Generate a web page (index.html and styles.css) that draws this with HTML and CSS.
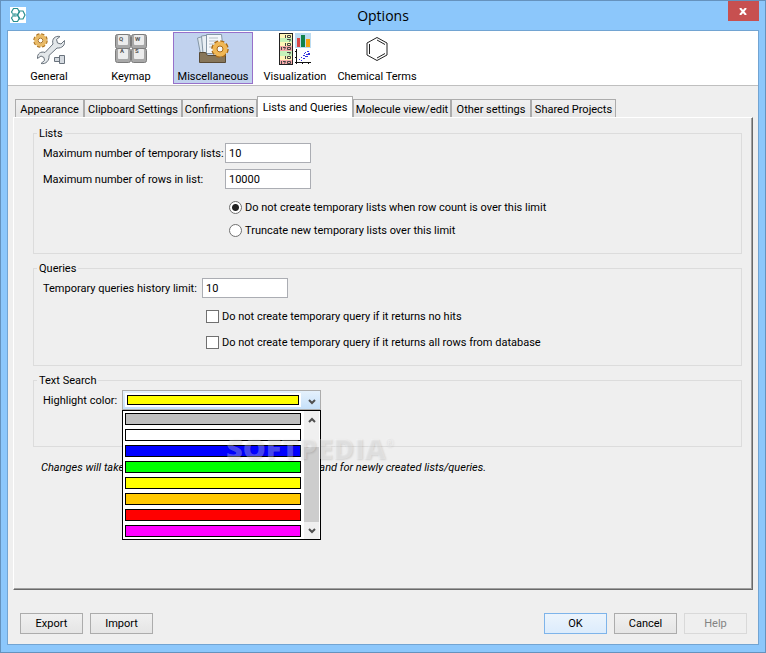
FILE: index.html
```html
<!DOCTYPE html>
<html lang="en">
<head>
    <meta charset="UTF-8">
    <meta name="viewport" content="width=device-width, initial-scale=1.0">
    <title>Options</title>
    <link rel="stylesheet" href="styles.css">
</head>
<body>
    <div class="window">
        <header class="title-bar">
            <svg class="app-icon" width="16" height="16" viewBox="0 0 16 16">
                <rect width="16" height="16" fill="#fff"/>
                <g fill="none" stroke="#2a8f8f" stroke-width="1.2">
                    <path d="M3.500 1.500h4L9.500 5l-2 3h-4l-2-3z"/>
                    <path d="M3.500 8h4l2 3-2 3.500h-4l-2-3.500z"/>
                    <path d="M9.500 4h3.500l2 4-2 4H9.500L7.500 8z"/>
                    <path d="M3 6.500h3v3H3z" stroke="#8cc4c4"/>
                </g>
            </svg>
            <h1>Options</h1>
            <button class="close" aria-label="Close">
                <svg width="8" height="7" viewBox="0 0 8 7"><path d="M1 0l6 7M7 0L1 7" stroke="#fff" stroke-width="2"/></svg>
            </button>
        </header>

        <main class="content">
            <nav class="toolbar">
                <button class="tool">
                    <svg width="32" height="32" viewBox="0 0 32 32">
                        <circle cx="7.500" cy="7.500" r="6" fill="none" stroke="#a87020" stroke-width="2.500" stroke-dasharray="3 1.700"/>
                        <circle cx="7.500" cy="7.500" r="4.500" fill="#fff" stroke="#e9ba66" stroke-width="3.500"/>
                        <circle cx="7.500" cy="7.500" r="2.400" fill="#fff" stroke="#a87020"/>
                        <path d="M31.500 7.500l-3.500 3.500-3.500-1-1-3.500L27 3.500c-5-1-8.500 2.500-7 7.500l-8 8.500c-4-1.500-8 1-7.500 6l3.500-2.500 3 1.500.5 3-3.500 3c5 1 8.500-3 8-8l8-7.500c5 .5 8.500-3 7.500-7.500z" fill="#e3e7ea" stroke="#69727c"/>
                        <path d="M21.500 24.500h5v4h-5zM26.500 22.500h5v8h-5z" fill="#d5dae0" stroke="#69727c"/>
                    </svg>
                    General
                </button>
                <button class="tool">
                    <svg width="32" height="32" viewBox="0 0 32 32">
                        <g fill="#a8a8a8" stroke="#7c7c7c">
                            <rect x="0.500" y="1.500" width="15" height="14" rx="2"/>
                            <rect x="16.500" y="1.500" width="15" height="14" rx="2"/>
                            <rect x="0.500" y="15.500" width="15" height="14" rx="2"/>
                            <rect x="16.500" y="15.500" width="15" height="14" rx="2"/>
                        </g>
                        <g fill="#ececec">
                            <rect x="3" y="2" width="10" height="10" rx="1"/>
                            <rect x="19" y="2" width="10" height="10" rx="1"/>
                            <rect x="3" y="16" width="10" height="10" rx="1"/>
                            <rect x="19" y="16" width="10" height="10" rx="1"/>
                        </g>
                        <g class="key-letters">
                            <text x="4" y="8">Q</text>
                            <text x="20" y="8">W</text>
                            <text x="5" y="20">A</text>
                            <text x="20" y="20">S</text>
                        </g>
                    </svg>
                    Keymap
                </button>
                <button class="tool active">
                    <svg width="32" height="32" viewBox="0 0 32 32">
                        <path d="M0.500 5l7-2 2 17-6 1z" fill="#dde6ed" stroke="#8496a5"/>
                        <path d="M4.500 3l8-1 1 18H6z" fill="#e9eff4" stroke="#8496a5"/>
                        <path d="M9.500 1.500h15l2 19h-17z" fill="#f4f7fa" stroke="#8496a5"/>
                        <path d="M12 5h9M12 8h9M12 11h6M12 14h4" stroke="#b4bec6"/>
                        <path d="M2.500 19.500h6l2 3h10l2-3h6v10h-26z" fill="#87765a" stroke="#594a34"/>
                        <circle cx="23" cy="16" r="7.500" fill="none" stroke="#a86a18" stroke-width="2.500" stroke-dasharray="3.900 2"/>
                        <circle cx="23" cy="16" r="5" fill="none" stroke="#f0b755" stroke-width="5"/>
                        <circle cx="23" cy="16" r="3" fill="#f4f7fa" stroke="#a86a18"/>
                    </svg>
                    Miscellaneous
                </button>
                <button class="tool">
                    <svg width="32" height="32" viewBox="0 0 32 32">
                        <rect x="0.500" y="0.500" width="13" height="31" fill="#fff6b8"/>
                        <path d="M1 5h12v4H1zM1 18h12v5H1z" fill="#c5f2ba"/>
                        <path d="M1 13h12v5H1zM1 27h12v4H1z" fill="#f5a9a9"/>
                        <rect x="0.500" y="0.500" width="13" height="31" fill="none" stroke="#222"/>
                        <path d="M6.500 2v3M8.500 2.500h3v2h-3zM8 6.500h3.500l-1 2M6.500 10v3M8.500 10.500h3v2h-3zM2.500 14v3M4 14.500h2.500l-1 2M8.500 14.500h3v2h-3zM8 19.500h3.500l-1 2M6.500 23v3M8.500 23.500h3v2h-3zM2.500 28v3M4 28.500h2.500l-1 2M8.500 28.500h3v2h-3z" fill="none" stroke="#444"/>
                        <rect x="16" y="0" width="16" height="15" fill="#bcdcf2"/>
                        <path d="M18 5h3v9h-3z" fill="#d84545"/>
                        <path d="M22 2h4v12h-4z" fill="#11824b"/>
                        <path d="M27 6h4v8h-4z" fill="#f4a30f"/>
                        <path d="M17.500 16v15M16 29.500h16M16 18.500h2M16 24.500h2M23.500 29v2M29.500 29v2" stroke="#111" fill="none"/>
                        <path d="M20 26.500h1M22 24.500h1M22 27.500h1M24 22.500h2M24 25.500h2M26 19.500h1M26 23.500h3M28 18.500h2M27 21.500h4M29 20.500h2M25 20.500h1" stroke="#3434dd"/>
                    </svg>
                    Visualization
                </button>
                <button class="tool">
                    <svg width="32" height="32" viewBox="0 0 32 32">
                        <g fill="none" stroke="#222">
                            <path d="M16 4.500l10 5.500v12l-10 5.500L6 22V10z"/>
                            <path d="M16 7l8 4.500M16 25l8-4.500M8.500 11v10"/>
                        </g>
                    </svg>
                    Chemical Terms
                </button>
            </nav>

            <div class="tabs" role="tablist">
                <button class="tab" role="tab">Appearance</button>
                <button class="tab" role="tab">Clipboard Settings</button>
                <button class="tab" role="tab">Confirmations</button>
                <button class="tab selected" role="tab" aria-selected="true">Lists and Queries</button>
                <button class="tab" role="tab">Molecule view/edit</button>
                <button class="tab" role="tab">Other settings</button>
                <button class="tab" role="tab">Shared Projects</button>
            </div>

            <section class="pane" role="tabpanel">
                <fieldset class="lists">
                    <legend>Lists</legend>
                    <div class="list-fields">
                        <label for="max-lists">Maximum number of temporary lists:</label>
                        <input type="text" id="max-lists" value="10">
                        <label for="max-rows">Maximum number of rows in list:</label>
                        <input type="text" id="max-rows" value="10000">
                    </div>
                    <div class="choices radios">
                        <label><input type="radio" name="limit" checked>Do not create temporary lists when row count is over this limit</label>
                        <label><input type="radio" name="limit">Truncate new temporary lists over this limit</label>
                    </div>
                </fieldset>

                <fieldset class="queries">
                    <legend>Queries</legend>
                    <div class="field history-field">
                        <label for="history">Temporary queries history limit:</label>
                        <input type="text" id="history" value="10">
                    </div>
                    <div class="choices checks">
                        <label><input type="checkbox">Do not create temporary query if it returns no hits</label>
                        <label><input type="checkbox">Do not create temporary query if it returns all rows from database</label>
                    </div>
                </fieldset>

                <fieldset class="search">
                    <legend>Text Search</legend>
                    <div class="field color-field">
                        <label for="highlight">Highlight color:</label>
                        <div class="combo">
                            <select id="highlight" class="combo-select">
                                <option value="yellow" aria-label="Yellow"></option>
                            </select>
                            <span class="combo-value"></span>
                            <svg class="combo-arrow" width="8" height="6" viewBox="0 0 8 6"><path d="M1 1l3 3 3-3" /></svg>
                            <div class="popup">
                                <ul class="colors" role="listbox" aria-label="Highlight color">
                                    <li class="gray" role="option"></li>
                                    <li class="white" role="option"></li>
                                    <li class="blue" role="option"></li>
                                    <li class="green" role="option"></li>
                                    <li class="yellow" role="option"></li>
                                    <li class="orange" role="option"></li>
                                    <li class="red" role="option"></li>
                                    <li class="magenta" role="option"></li>
                                </ul>
                                <div class="scrollbar">
                                    <svg width="8" height="6" viewBox="0 0 8 6"><path d="M1 5l3-3 3 3"/></svg>
                                    <div class="thumb"></div>
                                    <svg width="8" height="6" viewBox="0 0 8 6"><path d="M1 1l3 3 3-3"/></svg>
                                </div>
                            </div>
                        </div>
                    </div>
                </fieldset>

                <p class="note">Changes will take effect after the restart of the application and for newly created lists/queries.</p>
                <div class="watermark">SOFTPEDIA<sup>®</sup></div>
            </section>

            <footer class="actions">
                <button class="btn">Export</button>
                <button class="btn">Import</button>
                <button class="btn primary">OK</button>
                <button class="btn">Cancel</button>
                <button class="btn" disabled>Help</button>
            </footer>
        </main>
    </div>
</body>
</html>
```
FILE: styles.css
```css
* {
    margin: 0;
    padding: 0;
    box-sizing: border-box;
}

body {
    font-family: Roboto, "Liberation Sans", sans-serif;
    font-size: 11px;
    line-height: 15px;
    color: #000;
}

button,
input,
select {
    font: inherit;
    color: inherit;
}

.window {
    min-height: 100vh;
    display: flex;
    flex-direction: column;
    padding: 0 6px 7px;
    border: 1px solid #6592bd;
    background: #8cc7fb;
}

/* Title bar */
.title-bar {
    height: 29px;
    display: flex;
    align-items: flex-start;
    justify-content: space-between;
}

.app-icon {
    margin: 6px 0 0 3px;
}

.title-bar h1 {
    font-family: "Open Sans", "Noto Sans", sans-serif;
    font-size: 14px;
    font-weight: 400;
    line-height: 30px;
    padding-left: 12px;
}

.close {
    width: 31px;
    height: 20px;
    border: none;
    background: #c75050;
}

.content {
    flex: 1;
    display: flex;
    flex-direction: column;
    border: 1px solid #72a4d2;
    background: #efefef;
}

/* Toolbar */
.toolbar {
    display: flex;
    gap: 2px;
    padding: 1px;
    height: 55px;
    background: #fff;
    border-bottom: 1px solid #bfbfbf;
}

.tool {
    width: 80px;
    height: 52px;
    display: flex;
    flex-direction: column;
    align-items: center;
    gap: 4px;
    border: 1px solid transparent;
    background: none;
    white-space: nowrap;
}

.tool svg {
    flex: none;
}

.tool.active {
    border-color: #9770ca;
    background: #c1d2ee;
}

.key-letters {
    font-size: 6px;
    font-weight: 700;
    fill: #555;
}

/* Tabs */
.tabs {
    display: grid;
    grid-template-columns: 69px 98px 75px 96px 98px 80px 85px;
    align-items: end;
    height: 21px;
    margin: 10px 7px 0;
}

.tab {
    height: 18px;
    padding-top: 2px;
    border: 1px solid #acacac;
    border-bottom: none;
    background: linear-gradient(#f0f0f0, #e6e6e6);
    white-space: nowrap;
}

.tab.selected {
    position: relative;
    height: 22px;
    padding-bottom: 2px;
    margin-bottom: -1px;
    background: #fff;
}

.pane {
    position: relative;
    flex: 1;
    margin: 0 5px;
    padding: 8px 10px 8px 19px;
    border: 1px solid #fff;
    border-right-color: #696969;
    border-bottom-color: #696969;
    box-shadow: inset -1px -1px #a0a0a0;
}

fieldset {
    padding: 2px 9px;
    border: 1px solid #dcdcdc;
}

legend {
    margin-left: -6px;
    padding: 0 2px;
}

.lists {
    height: 128px;
}

.queries {
    height: 105px;
    margin-top: 7px;
}

.search {
    height: 74px;
    margin-top: 7px;
}

input[type="text"] {
    width: 86px;
    height: 20px;
    padding: 0 3px;
    border: 1px solid #abadb3;
    background: #fff;
}

.list-fields {
    display: grid;
    grid-template-columns: 182px 86px;
    row-gap: 6px;
    align-items: center;
    white-space: nowrap;
}

.field {
    display: grid;
    align-items: center;
    white-space: nowrap;
}

.history-field {
    grid-template-columns: 159px 86px;
}

.color-field {
    grid-template-columns: 79px 199px;
}

.choices {
    display: flex;
    flex-direction: column;
    align-items: flex-start;
}

.choices label {
    display: flex;
    align-items: center;
    gap: 3px;
}

.radios {
    gap: 8px;
    margin: 11px 0 0 186px;
}

.checks {
    gap: 11px;
    margin: 11px 0 0 163px;
}

input[type="radio"],
input[type="checkbox"] {
    appearance: none;
    width: 13px;
    height: 13px;
    border: 1px solid #707070;
    background: #fff;
}

input[type="radio"] {
    border-radius: 50%;
}

input[type="radio"]:checked {
    background: radial-gradient(circle, #222 3px, #fff 4px);
}

/* Highlight color drop-down */
.combo {
    position: relative;
    height: 20px;
}

.combo-select {
    appearance: none;
    display: block;
    width: 100%;
    height: 20px;
    border: 1px solid #acacac;
    background: linear-gradient(#e5f1fc, #c5e0fa);
}

.combo-value {
    position: absolute;
    inset: 3px 20px 3px 3px;
    border: 2px solid #fff;
    outline: 1px solid #000;
    outline-offset: -3px;
    background: #ff0;
}

.combo-arrow {
    position: absolute;
    top: 9px;
    right: 5px;
}

.combo path {
    fill: none;
    stroke: #505050;
    stroke-width: 2;
}

.popup {
    position: absolute;
    top: 20px;
    left: 0;
    width: 199px;
    height: 130px;
    display: flex;
    justify-content: space-between;
    padding-right: 1px;
    border: 1px solid #000;
    background: #fff;
}

.colors {
    list-style: none;
    width: 180px;
    padding: 2px;
    display: flex;
    flex-direction: column;
    gap: 4px;
}

.colors li {
    height: 12px;
    border: 1px solid #000;
}

.gray { background: #c0c0c0; }
.white { background: #fff; }
.blue { background: #00f; }
.green { background: #0f0; }
.yellow { background: #ff0; }
.orange { background: #ffc800; }
.red { background: #f00; }
.magenta { background: #f0f; }

.scrollbar {
    width: 15px;
    padding: 6px 0 5px;
    display: flex;
    flex-direction: column;
    align-items: center;
    background: #f0f0f0;
}

.thumb {
    width: 100%;
    flex: 1;
    margin: 24px 0 6px;
    background: #cdcdcd;
}

.note {
    margin: 13px 0 0 8px;
    font-style: italic;
}

.watermark {
    position: absolute;
    top: 315px;
    left: 212px;
    font: 800 29px/30px "Open Sans", sans-serif;
    color: rgba(255, 255, 255, 0.3);
    text-shadow: 1px 1px 2px rgba(0, 0, 0, 0.12);
}

.watermark sup {
    font-size: 10px;
    font-weight: 400;
    line-height: 10px;
    vertical-align: 12px;
}

/* Bottom buttons */
.actions {
    display: flex;
    gap: 7px;
    padding: 23px 11px 10px 12px;
}

.btn {
    width: 63px;
    height: 21px;
    border: 1px solid #acacac;
    background: linear-gradient(#f0f0f0, #e5e5e5);
}

.btn.primary {
    margin-left: auto;
    border-color: #7eb4ea;
    background: linear-gradient(#ecf4fc, #dcecfc);
}

.btn:disabled {
    border-color: #d9d9d9;
    background: #efefef;
    color: #838383;
}
```
